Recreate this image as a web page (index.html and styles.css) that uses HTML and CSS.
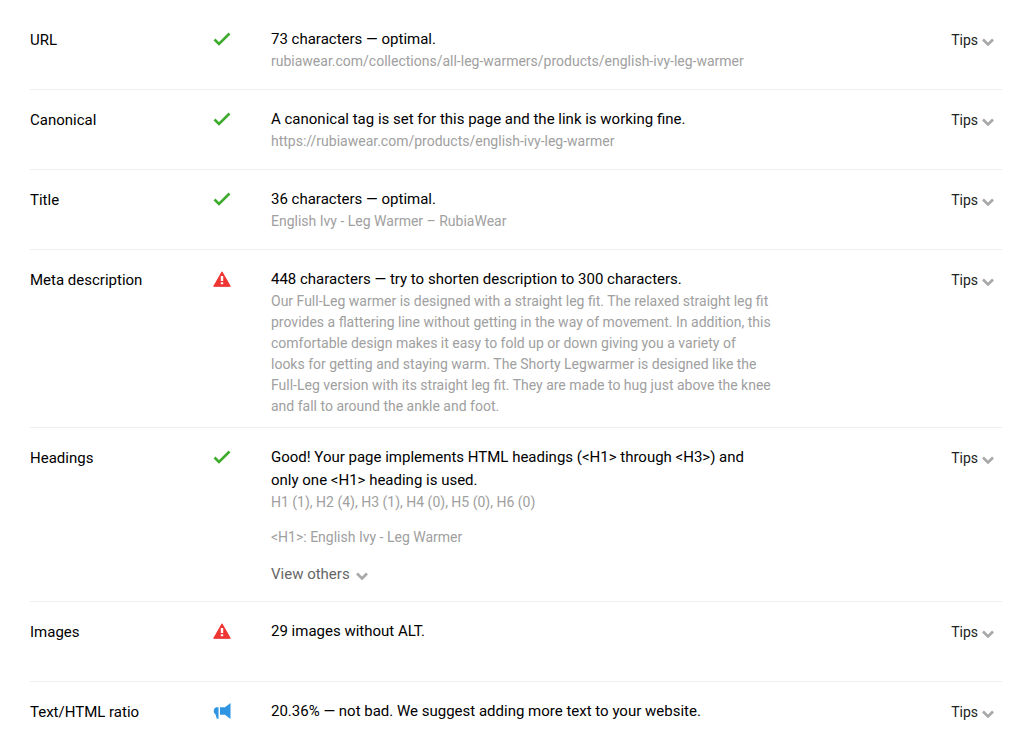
FILE: index.html
```html
<!DOCTYPE html>
<html lang="en">
<head>
<meta charset="utf-8">
<title>On-page SEO audit</title>
<link rel="stylesheet" href="styles.css">
</head>
<body>
<svg class="sprite" aria-hidden="true">
  <symbol id="check" viewBox="0 0 18 14"><path d="M1.500 7.500 6 12 16.500 1.500" fill="none" stroke="#3dab2b" stroke-width="2.600"/></symbol>
  <symbol id="warn" viewBox="0 0 18 16"><path d="M9 .8 17.300 15.300H.7Z" fill="#ef3434" stroke="#ef3434" stroke-linejoin="round"/><path d="M7.800 5h2.400v5H7.800ZM7.800 11.300h2.400v2H7.800Z" fill="#fff"/></symbol>
  <symbol id="horn" viewBox="0 0 18 18"><path d="M17.500 1v16L12 12.700H7V5.300h5ZM5.500 5.300V17L3.700 16.500 2.700 12.700Q.7 11.500.7 9T3 5.300Z" fill="#2f95e3"/></symbol>
  <symbol id="chevron" viewBox="0 0 12 8"><path d="M1 1.500 6 6.500 11 1.500" fill="none" stroke="#a8a8a8" stroke-width="2.600"/></symbol>
</svg>
<main class="audit">
  <section class="row">
    <h2 class="name">URL</h2>
    <svg class="status check"><use href="#check"/></svg>
    <div class="result"><p class="summary">73 characters — optimal.</p><p class="detail">rubiawear.com/collections/all-leg-warmers/products/english-ivy-leg-warmer</p></div>
    <button class="tips">Tips<svg class="chevron"><use href="#chevron"/></svg></button>
  </section>
  <section class="row">
    <h2 class="name">Canonical</h2>
    <svg class="status check"><use href="#check"/></svg>
    <div class="result"><p class="summary">A canonical tag is set for this page and the link is working fine.</p><p class="detail">https://rubiawear.com/products/english-ivy-leg-warmer</p></div>
    <button class="tips">Tips<svg class="chevron"><use href="#chevron"/></svg></button>
  </section>
  <section class="row">
    <h2 class="name">Title</h2>
    <svg class="status check"><use href="#check"/></svg>
    <div class="result"><p class="summary">36 characters — optimal.</p><p class="detail">English Ivy - Leg Warmer – RubiaWear</p></div>
    <button class="tips">Tips<svg class="chevron"><use href="#chevron"/></svg></button>
  </section>
  <section class="row">
    <h2 class="name">Meta description</h2>
    <svg class="status warn"><use href="#warn"/></svg>
    <div class="result"><p class="summary">448 characters — try to shorten description to 300 characters.</p><p class="detail">Our Full-Leg warmer is designed with a straight leg fit. The relaxed straight leg fit provides a flattering line without getting in the way of movement. In addition, this comfortable design makes it easy to fold up or down giving you a variety of looks for getting and staying warm. The Shorty Legwarmer is designed like the Full-Leg version with its straight leg fit. They are made to hug just above the knee and fall to around the ankle and foot.</p></div>
    <button class="tips">Tips<svg class="chevron"><use href="#chevron"/></svg></button>
  </section>
  <section class="row">
    <h2 class="name">Headings</h2>
    <svg class="status check"><use href="#check"/></svg>
    <div class="result"><p class="summary">Good! Your page implements HTML headings (&lt;H1&gt; through &lt;H3&gt;) and only one &lt;H1&gt; heading is used.</p><p class="detail">H1 (1), H2 (4), H3 (1), H4 (0), H5 (0), H6 (0)</p><p class="detail heading-text">&lt;H1&gt;: English Ivy - Leg Warmer</p>
      <button class="others">View others<svg class="chevron"><use href="#chevron"/></svg></button></div>
    <button class="tips">Tips<svg class="chevron"><use href="#chevron"/></svg></button>
  </section>
  <section class="row">
    <h2 class="name">Images</h2>
    <svg class="status warn"><use href="#warn"/></svg>
    <div class="result"><p class="summary">29 images without ALT.</p></div>
    <button class="tips">Tips<svg class="chevron"><use href="#chevron"/></svg></button>
  </section>
  <section class="row">
    <h2 class="name">Text/HTML ratio</h2>
    <svg class="status horn"><use href="#horn"/></svg>
    <div class="result"><p class="summary">20.36% — not bad. We suggest adding more text to your website.</p></div>
    <button class="tips">Tips<svg class="chevron"><use href="#chevron"/></svg></button>
  </section>
</main>
</body>
</html>
```
FILE: styles.css
```css
* { box-sizing: border-box; }
body { margin: 0; background: #fff; color: #000; font: 15px/23px Roboto, sans-serif; }
h2, p { margin: 0; font-size: inherit; font-weight: 400; }
button { border: 0; padding: 0; background: none; font: inherit; cursor: pointer; }
.sprite { position: absolute; width: 0; height: 0; }
.audit { padding: 10px 22px 0 30px; }
.row {
  display: grid;
  grid-template-columns: 183px 58px minmax(0, 500px) 1fr;
  align-items: start;
  min-height: 80px;
  padding: 18px 0 10px;
  border-bottom: 1px solid #eee;
}
.row:last-child { border-bottom: 0; }
.name { padding-top: 1px; }
.status { display: block; }
.check { width: 18px; height: 14px; margin-top: 4px; }
.warn { width: 18px; height: 16px; margin-top: 3px; }
.horn { width: 18px; height: 18px; margin-top: 2px; }
.detail { color: #a0a0a0; font-size: 14px; line-height: 21px; }
.heading-text { margin-top: 14px; }
.tips { display: flex; align-items: center; gap: 4px; justify-self: end; padding: 1px 8px 0 0; color: #222; font-size: 14px; }
.chevron { width: 12px; height: 8px; margin-top: 3px; }
.others { display: flex; align-items: center; gap: 6px; margin: 15px 0 5px; color: #666; }
```
